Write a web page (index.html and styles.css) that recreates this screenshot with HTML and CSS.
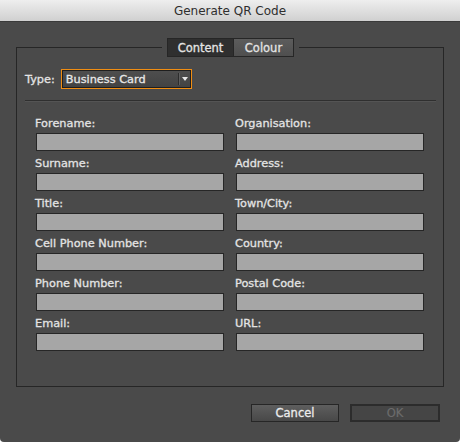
FILE: index.html
```html
<!DOCTYPE html>
<html lang="en">
<head>
<meta charset="utf-8">
<title>Generate QR Code</title>
<link rel="stylesheet" href="styles.css">
</head>
<body>
<div class="window">
  <header class="titlebar">Generate QR Code</header>
  <fieldset class="group">
    <legend class="tabs">
      <span class="tab tab-active">Content</span><span class="tab">Colour</span>
    </legend>
    <div class="type-row">
      <span class="label">Type:</span>
      <div class="select">
        <div class="select-inner">
          <span class="select-text">Business Card</span>
          <span class="select-btn"><span class="arrow"></span></span>
        </div>
      </div>
    </div>
    <div class="separator"></div>
    <div class="fields">
      <div class="field"><span class="label">Forename:</span><input class="box" type="text"></div>
      <div class="field"><span class="label">Organisation:</span><input class="box" type="text"></div>
      <div class="field"><span class="label">Surname:</span><input class="box" type="text"></div>
      <div class="field"><span class="label">Address:</span><input class="box" type="text"></div>
      <div class="field"><span class="label">Title:</span><input class="box" type="text"></div>
      <div class="field"><span class="label">Town/City:</span><input class="box" type="text"></div>
      <div class="field"><span class="label">Cell Phone Number:</span><input class="box" type="text"></div>
      <div class="field"><span class="label">Country:</span><input class="box" type="text"></div>
      <div class="field"><span class="label">Phone Number:</span><input class="box" type="text"></div>
      <div class="field"><span class="label">Postal Code:</span><input class="box" type="text"></div>
      <div class="field"><span class="label">Email:</span><input class="box" type="text"></div>
      <div class="field"><span class="label">URL:</span><input class="box" type="text"></div>
    </div>
  </fieldset>
  <div class="buttons">
    <button class="btn" type="button">Cancel</button>
    <button class="btn btn-disabled" type="button" disabled>OK</button>
  </div>
</div>
</body>
</html>
```
FILE: styles.css
```css
html {
  background: #ffffff;
}
body {
  margin: 0;
  font-family: "DejaVu Sans", "Noto Sans", sans-serif;
  font-size: 11.3px;
  color: #e2e2e2;
}
.window {
  width: 460px;
  height: 442px;
  background: #4a4a4a;
  border-radius: 0 0 4px 4px;
  overflow: hidden;
}
.titlebar {
  height: 22px;
  line-height: 21px;
  box-sizing: border-box;
  text-align: center;
  font-size: 12px;
  color: #2e2e2e;
  background: linear-gradient(#eeeeee, #d0d0d0);
  border-bottom: 1px solid #3a3a3a;
  padding-top: 1px;
}
.group {
  margin: 16px 0 0 16px;
  width: 428px;
  box-sizing: border-box;
  border: 1px solid #262626;
  padding: 12px 7px 35px 8px;
  min-width: 0;
}
.tabs {
  margin: 0 auto;
  padding: 0 5px;
  display: flex;
  font-size: 11.5px;
}
.tab {
  display: block;
  height: 19px;
  line-height: 18px;
  box-sizing: border-box;
  border: 1px solid #262626;
  border-left: 0;
  color: #e4e4e4;
  -webkit-text-stroke: 0.3px #e4e4e4;
  text-align: center;
  background: linear-gradient(#5c5c5c, #4f4f4f);
  width: 60px;
}
.tab-active {
  width: 67px;
  border-left: 1px solid #262626;
  background: #2f2f2f;
}
.type-row {
  display: flex;
  align-items: center;
  gap: 6px;
  height: 20px;
}
.select {
  width: 131px;
  height: 20px;
  box-sizing: border-box;
  border: 1px solid #f08d12;
}
.select-inner {
  height: 18px;
  box-sizing: border-box;
  border: 1px solid #1e1e1e;
  background: linear-gradient(#4e4e4e, #434343);
  display: flex;
  align-items: center;
}
.select-text {
  flex: 1;
  padding-left: 3px;
  color: #e8e8e8;
  -webkit-text-stroke: 0.3px #e8e8e8;
}
.select-btn {
  width: 11px;
  height: 12px;
  border-left: 1px solid #2c2c2c;
  box-shadow: inset 1px 0 0 #5e5e5e;
  display: flex;
  align-items: center;
  justify-content: center;
}
.arrow {
  width: 0;
  height: 0;
  border-left: 3.5px solid transparent;
  border-right: 3.5px solid transparent;
  border-top: 4px solid #e6e6e6;
  margin-left: 1px;
}
.separator {
  margin-top: 11px;
  height: 0;
  border-top: 1px solid #2f2f2f;
  border-bottom: 1px solid #545454;
}
.fields {
  margin-top: 15px;
  padding-left: 11px;
  display: grid;
  grid-template-columns: 188px 188px;
  column-gap: 12px;
  row-gap: 6px;
}
.field {
  display: flex;
  flex-direction: column;
}
.label {
  line-height: 13px;
  color: #e4e4e4;
  -webkit-text-stroke: 0.3px #e4e4e4;
}
.field .label {
  margin-left: -1px;
  margin-bottom: 3px;
}
.box {
  display: block;
  margin: 0;
  padding: 0;
  width: 188px;
  height: 18px;
  box-sizing: border-box;
  border: 1px solid #262626;
  border-radius: 0;
  background: #a6a6a6;
  outline: none;
  -webkit-appearance: none;
  appearance: none;
}
.buttons {
  display: flex;
  justify-content: flex-end;
  gap: 11px;
  padding-right: 20px;
  margin-top: 17px;
}
.btn {
  margin: 0;
  padding: 0;
  width: 88px;
  height: 18px;
  box-sizing: border-box;
  border: 1px solid #262626;
  border-radius: 0;
  background: linear-gradient(#5e5e5e, #484848);
  font-family: "DejaVu Sans", "Noto Sans", sans-serif;
  font-size: 11.5px;
  line-height: 16px;
  color: #ececec;
  -webkit-text-stroke: 0.3px #ececec;
  -webkit-appearance: none;
  appearance: none;
}
.btn-disabled {
  width: 90px;
  border: 2px solid #2c2c2c;
  background: #454545;
  color: #6c6c6c;
  -webkit-text-stroke: 0.2px #6c6c6c;
  line-height: 14px;
}
```
